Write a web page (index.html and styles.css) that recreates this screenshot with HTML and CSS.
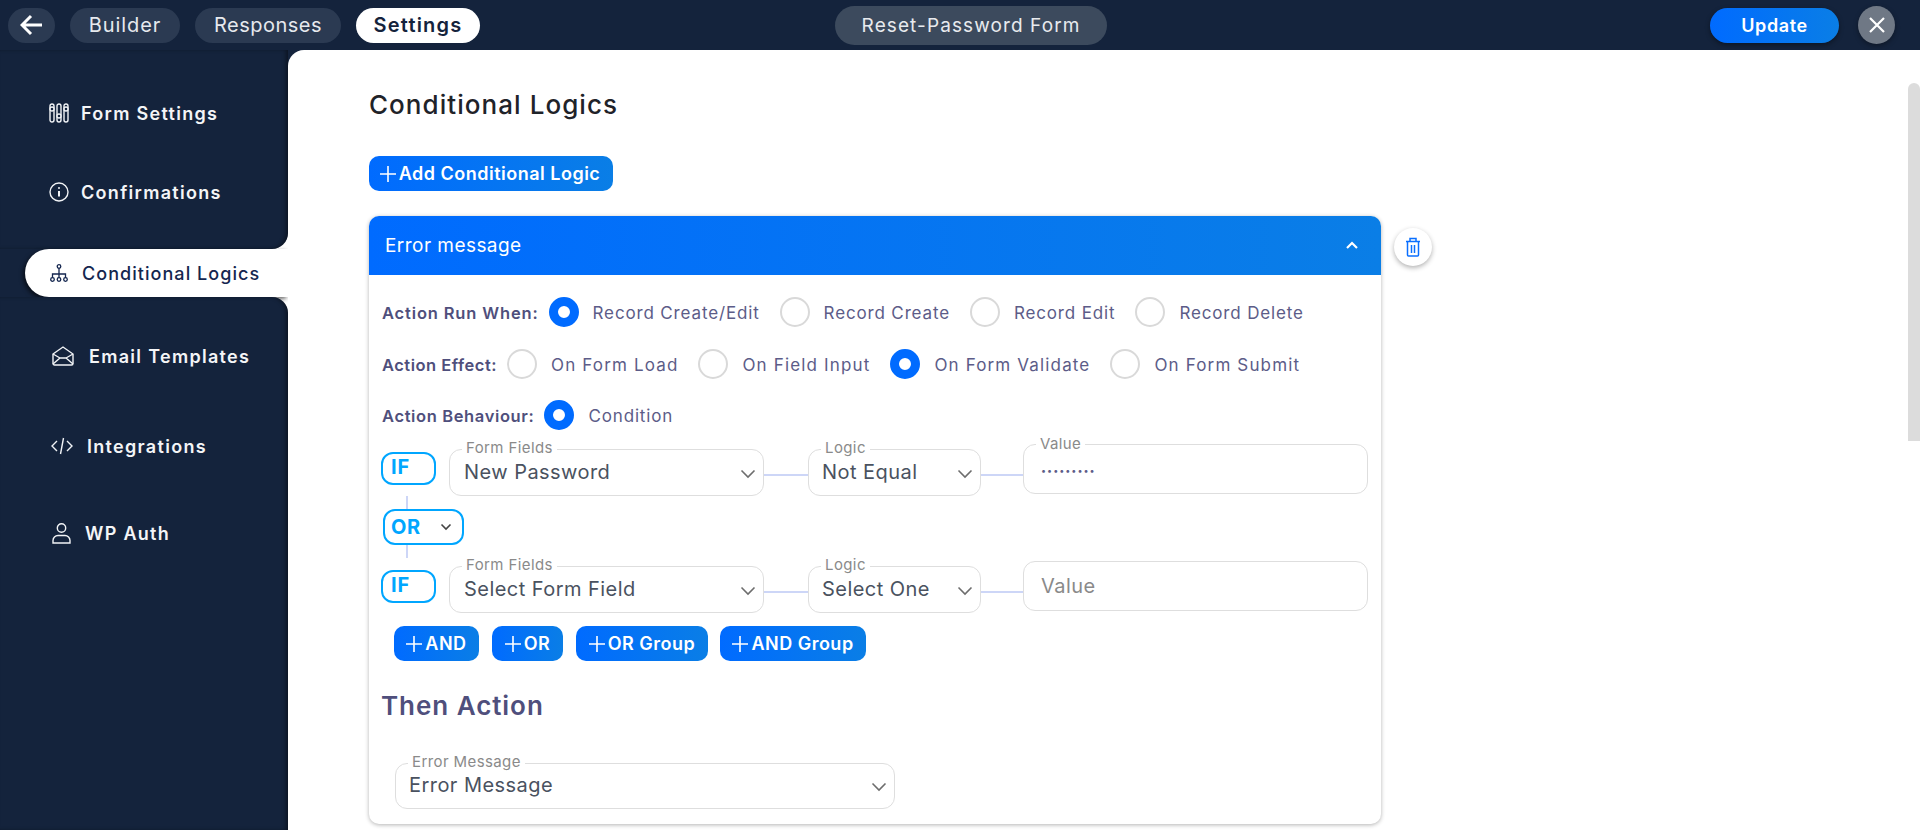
FILE: index.html
```html
<!DOCTYPE html>
<html lang="en">
<head>
<meta charset="utf-8">
<title>Reset-Password Form</title>
<link rel="stylesheet" href="styles.css">
</head>
<body>
<header class="topbar">
  <div class="tabs">
    <button class="pill back"><svg width="24" height="22" viewBox="0 0 24 22" class="ico-stroke-w3"><path d="M22 11H3M11 2l-9 9 9 9"/></svg></button>
    <button class="pill tab-builder">Builder</button>
    <button class="pill tab-responses">Responses</button>
    <button class="pill tab-settings">Settings</button>
  </div>
  <div class="form-name">Reset-Password Form</div>
  <div class="top-actions">
    <button class="update">Update</button>
    <button class="close"><svg width="18" height="18" viewBox="0 0 18 18" class="ico-stroke-w2"><path d="M2 2l14 14M16 2L2 16"/></svg></button>
  </div>
</header>
<div class="shell">
  <aside class="side">
    <div class="side-top">
      <a class="nav nav-1"><svg width="20" height="20" viewBox="0 0 20 20" class="ico-stroke"><rect x="1" y="1" width="4" height="18" rx="2"/><rect x="8" y="1" width="4" height="18" rx="2"/><rect x="15" y="1" width="4" height="18" rx="2"/><circle cx="3" cy="6" r="2" class="dot"/><circle cx="10" cy="13" r="2" class="dot"/><circle cx="17" cy="6" r="2" class="dot"/></svg><span>Form Settings</span></a>
      <a class="nav nav-2"><svg width="20" height="20" viewBox="0 0 20 20" class="ico-stroke"><circle cx="10" cy="10" r="9"/><path d="M10 9v5.5" stroke-width="2"/><path d="M10 5.2v1.6" stroke-width="2"/></svg><span>Confirmations</span></a>
    </div>
    <div class="side-active">
      <a class="nav-on"><svg width="18" height="18" viewBox="0 0 18 18" class="ico-navy"><circle cx="9" cy="2.5" r="1.8"/><circle cx="2.5" cy="15.5" r="1.8"/><circle cx="9" cy="15.5" r="1.8"/><circle cx="15.5" cy="15.5" r="1.8"/><path d="M9 4.3v9.4M2.5 13.7V10h13v3.7"/></svg><span>Conditional Logics</span></a>
    </div>
    <div class="side-bottom">
      <a class="nav nav-3"><svg width="22" height="20" viewBox="0 0 22 20" class="ico-stroke"><path d="M1 8l10-7 10 7v9.5a1.5 1.5 0 0 1-1.5 1.5h-17A1.5 1.5 0 0 1 1 17.500z"/><path d="M1 18l7-6h6l7 6M1 8l7 4M21 8l-7 4"/></svg><span>Email Templates</span></a>
      <a class="nav nav-4"><svg width="22" height="18" viewBox="0 0 22 18" class="ico-stroke"><path d="M6 4L1 9l5 5M16 4l5 5-5 5M12.500 1l-3 16"/></svg><span>Integrations</span></a>
      <a class="nav nav-5"><svg width="19" height="21" viewBox="0 0 19 21" class="ico-stroke"><circle cx="9.500" cy="5" r="4.200"/><path d="M1 20v-2.500A5 5 0 0 1 6 12.500h7a5 5 0 0 1 5 5V20z"/></svg><span>WP Auth</span></a>
    </div>
  </aside>
  <main class="main">
    <h1 class="title">Conditional Logics</h1>
    <button class="btn btn-add"><svg width="16" height="16" viewBox="0 0 16 16" class="plus"><path d="M8 0v16M0 8h16"/></svg>Add Conditional Logic</button>
    <div class="card-wrap">
      <section class="card">
        <div class="card-head"><span>Error message</span><svg width="14" height="9" viewBox="0 0 14 9" class="ico-stroke-w2"><path d="M2 7l5-5 5 5"/></svg></div>
        <div class="card-body">
          <div class="radio-row r1">
            <b class="rl">Action Run When:</b>
            <i class="radio on"></i><span class="rt">Record Create/Edit</span>
            <i class="radio"></i><span class="rt">Record Create</span>
            <i class="radio"></i><span class="rt">Record Edit</span>
            <i class="radio"></i><span class="rt">Record Delete</span>
          </div>
          <div class="radio-row r2">
            <b class="rl">Action Effect:</b>
            <i class="radio"></i><span class="rt">On Form Load</span>
            <i class="radio"></i><span class="rt">On Field Input</span>
            <i class="radio on"></i><span class="rt">On Form Validate</span>
            <i class="radio"></i><span class="rt">On Form Submit</span>
          </div>
          <div class="radio-row r3">
            <b class="rl">Action Behaviour:</b>
            <i class="radio on"></i><span class="rt">Condition</span>
          </div>
          <div class="cond cond-1">
            <div class="if">IF</div>
            <div class="field f-form"><label>Form Fields</label><span>New Password</span><svg width="16" height="10" viewBox="0 0 16 10" class="chev"><path d="M1.500 1.500L8 8l6.500-6.500"/></svg></div>
            <div class="link"></div>
            <div class="field f-logic"><label>Logic</label><span>Not Equal</span><svg width="16" height="10" viewBox="0 0 16 10" class="chev"><path d="M1.500 1.500L8 8l6.500-6.500"/></svg></div>
            <div class="link link-2"></div>
            <div class="field f-value"><label>Value</label><span class="dots">•••••••••</span></div>
          </div>
          <div class="or-block">
            <div class="vline"></div>
            <div class="or"><span>OR</span><svg width="12" height="8" viewBox="0 0 12 8" class="chev chev-dark"><path d="M1.500 1.500L6 6l4.500-4.500"/></svg></div>
            <div class="vline"></div>
          </div>
          <div class="cond">
            <div class="if if-2">IF</div>
            <div class="field f-form"><label>Form Fields</label><span>Select Form Field</span><svg width="16" height="10" viewBox="0 0 16 10" class="chev"><path d="M1.500 1.500L8 8l6.500-6.500"/></svg></div>
            <div class="link"></div>
            <div class="field f-logic"><label>Logic</label><span>Select One</span><svg width="16" height="10" viewBox="0 0 16 10" class="chev"><path d="M1.500 1.500L8 8l6.500-6.500"/></svg></div>
            <div class="link link-2"></div>
            <div class="field f-value"><span class="ph">Value</span></div>
          </div>
          <div class="adders">
            <button class="btn b-and"><svg width="16" height="16" viewBox="0 0 16 16" class="plus"><path d="M8 0v16M0 8h16"/></svg>AND</button>
            <button class="btn b-or"><svg width="16" height="16" viewBox="0 0 16 16" class="plus"><path d="M8 0v16M0 8h16"/></svg>OR</button>
            <button class="btn b-org"><svg width="16" height="16" viewBox="0 0 16 16" class="plus"><path d="M8 0v16M0 8h16"/></svg>OR Group</button>
            <button class="btn b-andg"><svg width="16" height="16" viewBox="0 0 16 16" class="plus"><path d="M8 0v16M0 8h16"/></svg>AND Group</button>
          </div>
          <h2 class="then">Then Action</h2>
          <div class="field f-err"><label>Error Message</label><span>Error Message</span><svg width="16" height="10" viewBox="0 0 16 10" class="chev"><path d="M1.500 1.500L8 8l6.500-6.500"/></svg></div>
        </div>
      </section>
      <button class="trash"><svg width="16" height="20" viewBox="0 0 16 20" class="ico-blue"><path d="M1 4.500h14M2.500 4.500V18a1 1 0 0 0 1 1h9a1 1 0 0 0 1-1V4.500M5 4.500V1.500h6v3M6.500 8v8M9.500 8v8"/></svg></button>
    </div>
    <div class="thumb"></div>
  </main>
</div>
</body>
</html>
```

FILE: styles.css
```css
* { box-sizing: border-box; }
html, body { margin: 0; height: 830px; overflow: hidden; }
body { background: #14233c; font-family: Inter, "Liberation Sans", sans-serif; color: #4a5260; }
button { border: 0; font-family: inherit; padding: 0; cursor: pointer; }
svg { display: block; flex: none; fill: none; }

.topbar { height: 50px; display: flex; position: relative; align-items: center; padding: 0 25px 0 8px; justify-content: space-between; }
.tabs { display: flex; gap: 15px; }
.pill { height: 35px; border-radius: 18px; background: #2b3a52; color: #e6e9ee; font-size: 20px; letter-spacing: .5px; display: flex; align-items: center; justify-content: center; }
.back { width: 47px; }
.tab-builder { width: 110px; letter-spacing: .9px; }
.tab-responses { width: 146px; }
.tab-settings { width: 124px; background: #fff; color: #14233c; font-weight: 600; letter-spacing: 1.2px; }
.form-name { position: absolute; left: 835px; top: 6px; width: 272px; height: 39px; border-radius: 20px; background: #3c4a5d; color: #e8eaee; font-size: 19px; letter-spacing: 1.1px; display: flex; align-items: center; justify-content: center; }
.top-actions { display: flex; align-items: center; gap: 19px; }
.update { width: 129px; height: 35px; border-radius: 18px; background: linear-gradient(90deg, #006bff, #0a7ee6); color: #fff; font-size: 18px; letter-spacing: .6px; font-weight: 600; box-shadow: 0 2px 5px rgba(0,0,0,.4); }
.close { width: 37px; height: 38px; border-radius: 50%; background: #6f7885; display: flex; align-items: center; justify-content: center; box-shadow: 0 2px 5px rgba(0,0,0,.35); }

.ico-stroke-w3 { stroke: #fff; stroke-width: 3; }
.ico-stroke-w2 { stroke: #fff; stroke-width: 2.200; }
.ico-stroke { stroke: #f1f3f6; stroke-width: 1.400; }
.ico-stroke .dot { fill: #14233c; }
.ico-navy { stroke: #14264f; stroke-width: 1.300; }
.ico-blue { stroke: #0a6fff; stroke-width: 1.500; }
.plus { stroke: #fff; stroke-width: 1.600; margin-right: 3px; }

.shell { display: flex; height: 780px; }
.side { width: 288px; flex: none; background: #fff; display: flex; flex-direction: column; }
.side-top { height: 199px; background: #14233c; border-bottom-right-radius: 16px; padding-top: 40px; box-shadow: inset -3px 0 4px -1px rgba(0,0,0,.45); }
.side-active { height: 48px; background: #14233c; padding-left: 25px; }
.side-bottom { flex: 1; background: #14233c; border-top-right-radius: 16px; padding-top: 36px; box-shadow: inset -3px 0 4px -1px rgba(0,0,0,.45); }
.nav { display: flex; align-items: center; height: 46px; color: #f4f5f7; font-size: 18px; font-weight: 600; letter-spacing: 1.3px; padding-left: 49px; }
.nav-1, .nav-2 { gap: 12px; }
.nav-2 { margin-top: 33px; }
.nav-3 { padding-left: 52px; gap: 15px; }
.nav-4 { padding-left: 51px; gap: 14px; margin-top: 44px; }
.nav-5 { padding-left: 52px; gap: 14px; margin-top: 41px; }
.nav-on { display: flex; align-items: center; gap: 14px; height: 48px; background: #fff; border-radius: 24px 0 0 24px; padding-left: 25px; color: #14264f; font-size: 18px; font-weight: 500; letter-spacing: 1.05px; box-shadow: -2px 2px 4px rgba(0,0,0,.6); }

.main { flex: 1; background: #fff; border-top-left-radius: 16px; padding: 40px 0 0 81px; position: relative; overflow: hidden; }
.title { margin: 0; font-size: 26px; line-height: 30px; font-weight: 500; color: #1f2329; letter-spacing: 1.05px; }
.btn { display: inline-flex; align-items: center; justify-content: center; height: 35px; border-radius: 10px; background: linear-gradient(90deg, #006bff, #0a7ee6); color: #fff; font-size: 18px; letter-spacing: .5px; font-weight: 600; }
.btn-add { width: 244px; margin-top: 36px; padding-right: 2px; }
.card-wrap { display: flex; align-items: flex-start; gap: 13px; margin-top: 25px; }
.card { width: 1012px; border-radius: 10px; background: #fff; box-shadow: 0 1px 4px rgba(0,0,0,.3); }
.card-head { height: 59px; border-radius: 10px 10px 0 0; background: linear-gradient(90deg, #006bff, #0a7ee6); color: #fff; font-size: 19px; display: flex; align-items: center; justify-content: space-between; padding: 0 22px 0 16px; letter-spacing: .45px; }
.card-body { padding: 22px 13px 15px; }
.radio-row { display: flex; align-items: center; height: 30px; font-size: 17px; }
.r2 { margin-top: 22px; }
.r3 { margin-top: 21px; }
.rl { font-weight: 600; color: #4f4f7c; font-size: 16.500px; letter-spacing: .85px; margin-right: 10px; padding-top: 2px; white-space: nowrap; }
.r2 .rl { letter-spacing: .5px; }
.r3 .rl { letter-spacing: .63px; }
.radio { width: 30px; height: 30px; flex: none; border-radius: 50%; border: 2px solid #d9d9d9; }
.radio.on { border: 9.500px solid #006bff; background: #fff; }
.rt { color: #5c5c88; margin: 0 20px 0 14px; padding-top: 2px; white-space: nowrap; letter-spacing: .85px; }
.r2 .rt { letter-spacing: 1.15px; }
.cond { display: flex; align-items: flex-start; height: 52px; margin-left: -1px; }
.cond-1 { margin-top: 14px; }
.if { width: 55px; height: 33px; margin-top: 8px; margin-right: 13px; flex: none; border: 2px solid #00a6ff; border-radius: 12px; color: #00a6ff; font-weight: 700; font-size: 20px; padding-left: 8px; line-height: 27px; letter-spacing: 1px; }
.if-2 { margin-top: 9px; }
.field { position: relative; display: flex; align-items: center; justify-content: space-between; flex: none; height: 47px; border: 1px solid #dedede; border-radius: 12px; padding: 0 7px 0 14px; font-size: 20px; letter-spacing: .45px; color: #4a5260; background: #fff; }
.field svg { position: relative; top: 1px; }
.field label { position: absolute; left: 12px; top: -10px; padding: 0 4px; background: #fff; color: #8a8a8a; font-size: 15px; letter-spacing: .4px; line-height: 16px; }
.field span { position: relative; top: -1px; white-space: nowrap; }
.f-form { width: 315px; margin-top: 5px; }
.f-logic { width: 173px; margin-top: 5px; padding-left: 13px; }
.f-value { width: 345px; height: 50px; padding-left: 17px; }
.f-value label { top: -9px; }
.field .ph { color: #8a8a8a; top: 0; }
.field .dots { font-size: 9px; letter-spacing: 1px; color: #5c5c88; top: 1px; }
.chev { stroke: #6d6d6d; stroke-width: 1.600; }
.chev-dark { stroke: #444; }
.link { width: 44px; height: 2px; margin-top: 30px; flex: none; background: #cdd6f7; }
.link-2 { width: 42px; }
.or-block { margin: 0 0 3px 1px; }
.vline { width: 2px; height: 13px; background: #cdd6f7; margin-left: 23px; }
.or { width: 81px; height: 36px; border: 2px solid #00a6ff; border-radius: 12px; color: #00a6ff; font-weight: 700; font-size: 20px; letter-spacing: .7px; display: flex; align-items: center; justify-content: space-between; padding: 0 10px 0 6px; }
.adders { display: flex; gap: 13px; margin: 13px 0 0 12px; }
.b-and { width: 85px; }
.b-or { width: 71px; }
.b-org { width: 132px; }
.b-andg { width: 146px; margin-left: -1px; }
.then { margin: 30px 0 -1px -1px; font-size: 26px; line-height: 30px; font-weight: 600; color: #4f4f7c; letter-spacing: .95px; }
.f-err { width: 500px; height: 46px; margin: 43px 0 0 13px; padding-left: 13px; }
.trash { width: 38px; height: 38px; margin-top: 12px; border-radius: 50%; background: #fff; box-shadow: 0 2px 5px rgba(0,0,0,.3); display: flex; align-items: center; justify-content: center; }
.thumb { position: absolute; right: 0; top: 33px; width: 12px; height: 358px; background: #dcdcdc; border-radius: 6px 6px 0 0; }
```
